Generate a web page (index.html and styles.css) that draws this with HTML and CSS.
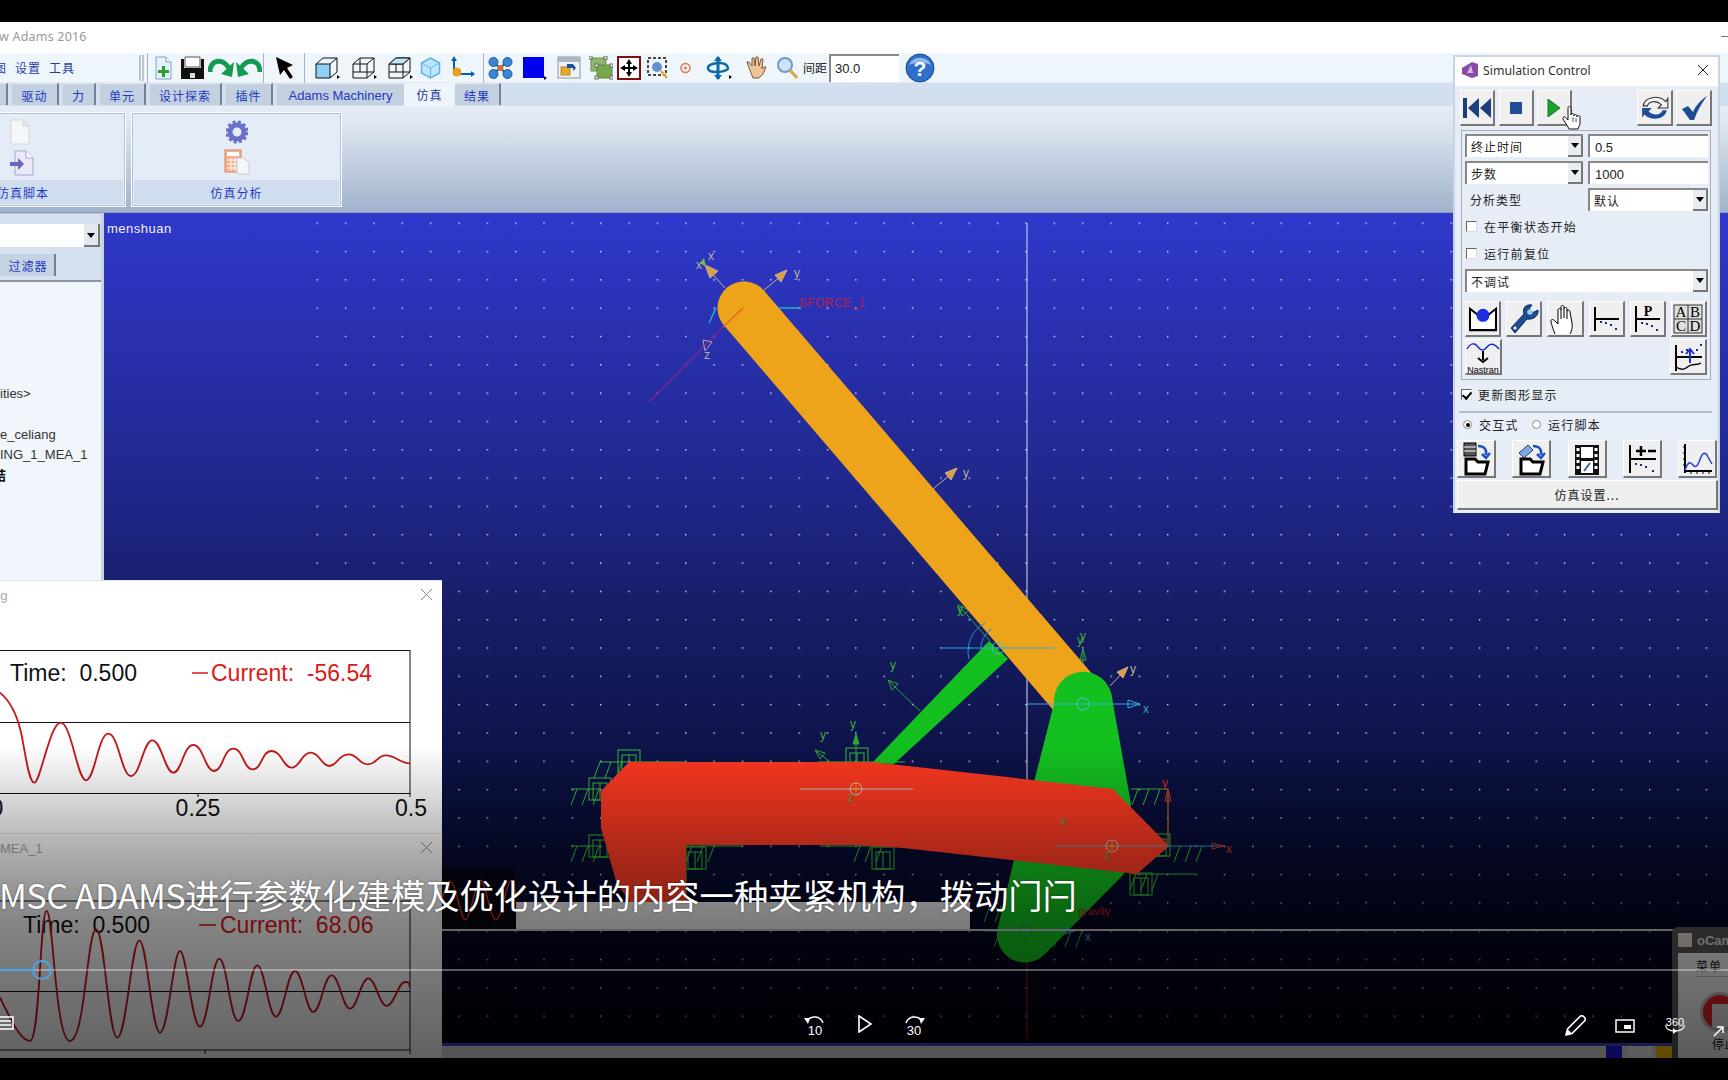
FILE: index.html
```html
<!DOCTYPE html>
<html lang="zh">
<head>
<meta charset="utf-8">
<title>Adams 2016</title>
<link rel="stylesheet" href="styles.css">
</head>
<body>
<div class="screen">
  <div class="bar-top"></div>
  <div class="app">
    <div class="titlebar"><span class="app-name">w Adams 2016</span><span class="min-dash"></span></div>
    <div class="toolbar">
      <div class="menu"><span class="clip">图</span><span>设置</span><span>工具</span></div>
      <i class="grip"></i><i class="sep ml3"></i>
      <svg class="ml7" width="17" height="24" viewBox="0 0 17 24"><path d="M1 1h10l5 5v17H1z" fill="#e4f0fa" stroke="#7ea4c8"/><path d="M11 1v5h5" fill="#fff" stroke="#7ea4c8"/><path d="M7 10h3v4h4v3h-4v4H7v-4H3v-3h4z" fill="#2aa02a"/></svg>
      <svg class="ml9" width="23" height="24" viewBox="0 0 23 24"><path d="M0 3h3v9h17V3h3v20H0z" fill="#111"/><path d="M5 15h13v8H5z" fill="#111"/><rect x="9" y="17" width="5" height="5" fill="#ddd"/><path d="M4 1h15v10H4z" fill="#fff" stroke="#555"/></svg>
      <svg class="ml4" width="26" height="24" viewBox="0 0 26 24"><path d="M2 16C2 3 16 1 22 14" fill="none" stroke="#159a52" stroke-width="5"/><path d="M26 6l-2 15-11-3z" fill="#159a52"/></svg>
      <svg class="ml2" width="26" height="24" viewBox="0 0 26 24"><path d="M24 16C24 3 10 1 4 14" fill="none" stroke="#159a52" stroke-width="5"/><path d="M0 6l2 15 11-3z" fill="#159a52"/></svg>
      <i class="sep ml1"></i>
      <svg class="ml11" width="19" height="24" viewBox="0 0 19 24"><path d="M1 1l17 8-6 3 6 9-3 2-6-9-4 5z" fill="#000"/></svg>
      <i class="sep ml10"></i>
      <svg class="ml10" width="25" height="24" viewBox="0 0 25 24"><path d="M1 8h14v14H1z" fill="#8fd0f4" stroke="#111"/><path d="M1 8l7-6h14v14l-7 6M15 8l7-6" fill="none" stroke="#111"/><path d="M22 19l3 2-3 2z"/></svg>
      <svg class="ml12" width="25" height="24" viewBox="0 0 25 24"><path d="M1 8h14v14H1zM1 8l7-6h14v14l-7 6M15 8l7-6M8 2v14H1M8 16h14" fill="none" stroke="#111"/><path d="M22 19l3 2-3 2z"/></svg>
      <svg class="ml11" width="25" height="24" viewBox="0 0 25 24"><path d="M1 8h14v14H1zM1 8l7-6h14v14l-7 6M15 8l7-6M8 2v14H1M8 16h14" fill="none" stroke="#111"/><path d="M1 8l7-6h14l-7 6z" fill="#bfe3f8" stroke="#111"/><path d="M22 19l3 2-3 2z"/></svg>
      <svg class="ml7" width="21" height="24" viewBox="0 0 21 24"><path d="M10.500 2l9 5v10l-9 5-9-5V7z" fill="#bfe6fb" stroke="#5fb4e4" stroke-width="1.500"/><path d="M1.500 7l9 5 9-5M10.500 12v10" fill="none" stroke="#5fb4e4"/></svg>
      <svg class="ml9" width="27" height="24" viewBox="0 0 27 24"><path d="M4 3v15h17" fill="none" stroke="#0a5fb0" stroke-width="2"/><path d="M4 0l3 5H1zM25 18l-4 3v-6z" fill="#0a5fb0"/><circle cx="7" cy="16" r="4.500" fill="#e8a21e"/></svg>
      <i class="sep ml6"></i>
      <svg class="ml4" width="25" height="24" viewBox="0 0 25 24"><path d="M5 6L19 18M19 6L5 18" stroke="#1f5a9c" stroke-width="2"/><g fill="#3a86d2" stroke="#1f5a9c"><circle cx="5.500" cy="6" r="4.500"/><circle cx="19.500" cy="6" r="4.500"/><circle cx="5.500" cy="18" r="4.500"/><circle cx="19.500" cy="18" r="4.500"/></g><circle cx="12.500" cy="12" r="3" fill="#e06a2a"/></svg>
      <svg class="ml9" width="25" height="24" viewBox="0 0 25 24"><rect x="1" y="1" width="21" height="21" fill="#0000f0"/><path d="M22 20l3 2-3 2z"/></svg>
      <svg class="ml10" width="25" height="24" viewBox="0 0 25 24"><rect x="1" y="1" width="22" height="21" fill="#eef2f7" stroke="#8a96a4"/><rect x="1" y="1" width="22" height="5" fill="#a9b6c4"/><rect x="4" y="11" width="9" height="8" fill="#e6aa2e" stroke="#b98a20"/><path d="M10 8h6l3 4-3 3v-3h-6z" fill="#1d4f9c"/></svg>
      <svg class="ml7" width="24" height="24" viewBox="0 0 24 24"><rect x="2" y="2" width="15" height="13" fill="#8db56b" stroke="#6f8f55"/><rect x="8" y="9" width="15" height="13" fill="#76a84c" stroke="#5e8a3c"/><g fill="#fff" stroke="#666"><rect x="0" y="0" width="3" height="3"/><rect x="15" y="0" width="3" height="3"/><rect x="6" y="8" width="3" height="3"/><rect x="21" y="8" width="3" height="3"/><rect x="6" y="20" width="3" height="3"/><rect x="21" y="20" width="3" height="3"/></g></svg>
      <svg class="ml4" width="24" height="24" viewBox="0 0 24 24"><rect x="1" y="1" width="22" height="22" fill="#fff" stroke="#7a1010" stroke-width="2"/><path d="M12 3l3 5h-2v3h3V9l5 3-5 3v-2h-3v3h2l-3 5-3-5h2v-3H8v2l-5-3 5-3v2h3V8H9z"/></svg>
      <svg class="ml6" width="22" height="24" viewBox="0 0 22 24"><rect x="1" y="2" width="18" height="17" fill="none" stroke="#111" stroke-width="1.500" stroke-dasharray="3 2"/><circle cx="10" cy="11" r="5" fill="#5f93cf"/><path d="M14 15l6 7" stroke="#d9a93c" stroke-width="2.500"/></svg>
      <svg class="ml11" width="11" height="24" viewBox="0 0 11 24"><circle cx="5.500" cy="12" r="4.500" fill="none" stroke="#e4774d" stroke-width="1.500"/><circle cx="5.500" cy="12" r="1.500" fill="#e4774d"/></svg>
      <svg class="ml15" width="26" height="24" viewBox="0 0 26 24"><path d="M12 1v22" stroke="#0d6aa8" stroke-width="3"/><path d="M2 12c0-4 8-5 12-5s8 2 8 5-8 4-12 4-8-1-8-4z" fill="none" stroke="#0d6aa8" stroke-width="2.500"/><path d="M12 0l4 5H8zM12 24l4-5H8z" fill="#0d6aa8"/><path d="M23 19l3 2-3 2z"/></svg>
      <svg class="ml13" width="22" height="24" viewBox="0 0 22 24"><path d="M4 12L2 6h2l3 4 0-8h2l1 8 1-9h2l1 9 2-7h2l-1 10 2-2h2l-3 7-4 4H8z" fill="#eec39a" stroke="#7d5a3a"/></svg>
      <svg class="ml9" width="22" height="24" viewBox="0 0 22 24"><circle cx="9" cy="9" r="7" fill="#cfe3f6" stroke="#6d99c8" stroke-width="2"/><path d="M14 14l7 8" stroke="#d9a93c" stroke-width="3"/></svg>
      <span class="tb-label ml5">间距</span>
      <div class="tb-input ml1">30.0</div>
      <svg class="ml5" width="33" height="30" viewBox="0 0 33 30"><circle cx="16" cy="15" r="14" fill="#2f6fc8" stroke="#1c4a94"/><path d="M5 12a12 12 0 0 1 22 0c-6-3-15-3-22 0z" fill="#8fb7ea"/><text x="16" y="23" class="q">?</text></svg>
    </div>
    <div class="tabs">
      <span class="tab t-clip"></span><span class="tab t-w47">驱动</span><span class="tab t-w33">力</span><span class="tab t-w46">单元</span><span class="tab t-w72">设计探索</span><span class="tab t-w47">插件</span><span class="tab t-w126">Adams Machinery</span><span class="tab tab-active">仿真</span><span class="tab t-w46">结果</span>
    </div>
    <div class="ribbon">
      <section class="panel p1">
        <div class="panel-icons">
          <svg width="20" height="26" viewBox="0 0 20 26"><path d="M1 1h12l6 6v18H1z" fill="#f6f7f9" stroke="#d5d8dd"/><path d="M13 1v6h6" fill="#e2e4e8" stroke="#d5d8dd"/></svg>
          <svg width="24" height="26" viewBox="0 0 24 26"><path d="M5 1h11l7 7v17H5z" fill="#ebe8f7" stroke="#a9a3d6"/><path d="M16 1v7h7" fill="#fff" stroke="#a9a3d6"/><path d="M0 12h8V8l6 6-6 6v-4H0z" fill="#6a66c0"/></svg>
        </div>
        <div class="panel-foot">仿真脚本</div>
      </section>
      <section class="panel p2">
        <div class="panel-icons">
          <svg width="22" height="24" viewBox="0 0 22 24"><circle cx="11" cy="12" r="7" fill="none" stroke="#6a70c8" stroke-width="5"/><circle cx="11" cy="12" r="10" fill="none" stroke="#6a70c8" stroke-width="3" stroke-dasharray="3 2.300"/></svg>
          <svg width="26" height="26" viewBox="0 0 26 26"><rect x="1" y="1" width="16" height="22" fill="#f5b08c" stroke="#e2805c"/><rect x="3" y="3" width="12" height="4" fill="#fff"/><path d="M3 11h12M3 15h12M3 19h12M7 9v13M11 9v13" stroke="#fff"/><path d="M13 9h7l5 5v11H13z" fill="#f5f6f9" stroke="#c8ccd4"/></svg>
        </div>
        <div class="panel-foot">仿真分析</div>
      </section>
    </div>
    <div class="workspace">
      <aside class="tree">
        <div class="tree-top">
          <div class="tree-select"><span class="mini-drop"></span></div>
          <div class="tree-filter-row"><span class="filter">过滤器</span></div>
        </div>
        <div class="tree-list">
          <div class="tl1">ities&gt;</div>
          <div class="tl2">e_celiang</div>
          <div class="tl3">ING_1_MEA_1</div>
          <div class="tl4">结</div>
        </div>
      </aside>
      <div class="viewport">
        <svg class="canvas" viewBox="104 212 1624 846" width="1624" height="846">
          <defs>
            <pattern id="dots" patternUnits="userSpaceOnUse" x="316.5" y="221.500" width="28.35" height="28.32"><rect width="1.400" height="1.400" fill="#fff" opacity=".85"/></pattern>
            <linearGradient id="redg" gradientUnits="userSpaceOnUse" x1="0" y1="761" x2="0" y2="905"><stop offset="0" stop-color="#fc3820"/><stop offset="1" stop-color="#ff3c26"/></linearGradient>
            <g id="hatch" fill="none" stroke="#35c035" stroke-width="1"><path d="M0 0l-6 16M11 0l-6 16M22 0l-6 16"/></g>
            <g id="boxes" fill="none" stroke="#35c035" stroke-width="1"><rect width="22" height="22"/><rect x="4" y="5" width="14" height="17"/><path d="M11 5v17"/></g>
          </defs>
          <rect x="316" y="212" width="1412" height="846" fill="url(#dots)"/>
          <text x="107" y="232" class="mname">menshuan</text>
          <path d="M1027 222V930" stroke="#d8dcf0" stroke-width="1"/>
          <path d="M1027 930V1040" stroke="#b01414" stroke-width="1"/>
          <!-- ground markers -->
          <g>
            <path d="M601 761H686M571 788H600M571 845H600M686 845H743M686 845V895M818 761H905M820 845H905M1131 788H1168V845M1132 873H1195" fill="none" stroke="#35c035"/>
            <use href="#boxes" x="618" y="749"/><use href="#boxes" x="589" y="777"/><use href="#boxes" x="589" y="834"/><use href="#boxes" x="684" y="846"/><use href="#boxes" x="846" y="747"/><use href="#boxes" x="872" y="846"/><use href="#boxes" x="1148" y="833"/><use href="#boxes" x="1130" y="872"/>
            <use href="#hatch" x="600" y="761"/><use href="#hatch" x="577" y="788"/><use href="#hatch" x="577" y="845"/><use href="#hatch" x="692" y="845"/><use href="#hatch" x="860" y="845"/><use href="#hatch" x="1138" y="788"/><use href="#hatch" x="1180" y="845"/><use href="#hatch" x="1136" y="873"/><use href="#hatch" x="1000" y="930"/><use href="#hatch" x="1060" y="930"/><use href="#hatch" x="990" y="905"/>
          </g>
          <!-- axis triads behind links -->
          <g fill="none" stroke="#2ea436">
            <path d="M856 761V733"/><path d="M856 733l-3 10h6z" fill="#2ea436"/>
            <path d="M920 710L888 679"/><path d="M888 679l4 10 6-6z"/>
            <path d="M829 760L816 750"/><path d="M815 749l5 9 5-6z"/>
            <path d="M1083 680V650"/><path d="M1083 648l-3 11h6z"/>
            <path d="M990 640L960 606"/><path d="M958 604l4 11 7-6z"/>
          </g>
          <g class="axt green"><text x="850" y="727">y</text><text x="890" y="668">y</text><text x="820" y="738">y</text><text x="1077" y="643">y</text><text x="957" y="612">y</text></g>
          <!-- green rocker -->
          <path d="M1054 703a29 29 0 0 1 58 -6L1131 803 1124 873 1046 952a28 28 0 0 1-48-26L1013 863z" fill="#14c020"/>
          <!-- orange bar -->
          <path d="M744 307L1083 703" stroke="#eea41a" stroke-width="53" stroke-linecap="round" fill="none"/>
          <path d="M1054 703a29 29 0 0 1 58 -6L1120 760 1040 760z" fill="#14c020"/>
          <!-- green link -->
          <path d="M989 640L1008 658 894 763 872 762z" fill="#14c020"/>
          <!-- red body -->
          <path d="M629 761H872L1113 788 1169 845 1137 873 903 847 855 844H686V895L690 905H632L616 880 601 827V790z" fill="url(#redg)"/>
          <!-- top triads -->
          <g fill="none" stroke="#c8b090">
            <path d="M725 287L708 268"/><path d="M705 264l5 13 8-7z" fill="#d8a040"/>
            <path d="M763 290L787 270"/><path d="M787 269l-12 5 6 7z" fill="#d8a040"/>
            <path d="M933 488L957 468"/><path d="M957 467l-12 5 6 7z" fill="#d8a040"/>
            <path d="M1110 685L1127 667"/><path d="M1128 666l-11 5 6 6z" fill="#d8a040"/>
          </g>
          <path d="M704 257l2 9-6-4z" fill="#7ac030"/>
          <path d="M649 401L723 326" stroke="#742a8c" stroke-width="1.500"/><path d="M723 326L743 307" stroke="#e2651e" stroke-width="1.200"/>
          <path d="M705 350l-2-11 9 2z" fill="none" stroke="#c0a0a0"/>
          <path d="M778 307H801" stroke="#22c0c8" stroke-width="1.300"/><path d="M716 307l-7 15" stroke="#22c0c8" stroke-width="1.300"/>
          <g class="axt tan"><text x="708" y="259">x</text><text x="696" y="268">x</text><text x="794" y="276">y</text><text x="704" y="358">z</text><text x="963" y="476">y</text><text x="1130" y="672">y</text></g>
          <text x="799" y="306" class="sforce">SFORCE_1</text>
          <!-- markers -->
          <g fill="none">
            <path d="M942 647H1054" stroke="#28a8e0" stroke-width="1.200"/>
            <path d="M985 622a32 32 0 0 0-16 36M992 628a22 22 0 0 0-11 22" stroke="#2b8ade"/>
            <circle cx="998" cy="647" r="6" stroke="#40c8b0"/>
            <path d="M1027 703H1140" stroke="#38a8e4" stroke-width="1.200"/><path d="M1140 703l-12-4v8z" stroke="#38a8e4"/>
            <circle cx="1083" cy="703" r="6" stroke="#40d0c0"/>
            <path d="M800 788H913" stroke="#c8c8d0" stroke-width="1.200"/>
            <circle cx="856" cy="788" r="6" stroke="#e0d0b0"/><path d="M852 788h8M856 784v8" stroke="#e8a020"/>
            <path d="M1055 845H1168" stroke="#58a8c8" stroke-width="1.200"/>
            <circle cx="1112" cy="845" r="6" stroke="#c0d8b0"/><path d="M1108 845h8M1112 841v8" stroke="#e8a020"/>
            <path d="M1168 845V790" stroke="#e03020"/><path d="M1168 788l-3 12h6z" stroke="#e03020"/>
            <path d="M1168 845H1222" stroke="#28a0c0"/><path d="M1224 845l-12-3v6z" stroke="#e03020"/>
            <path d="M985 930H1075" stroke="#28a8c8" stroke-width="1"/><circle cx="1026" cy="930" r="6" stroke="#208068"/><path d="M1075 930l-10-3v6z" stroke="#28a8c8"/>
          </g>
          <g class="axt"><text class="green" x="1080" y="639">y</text><text class="cyan" x="1143" y="712">x</text><text class="red" x="1162" y="786">y</text><text class="red" x="1226" y="852">x</text><text class="green" x="1060" y="824">x</text><text class="green" x="848" y="800">z</text><text class="green" x="1104" y="858">z</text><text class="cyan" x="1085" y="940">x</text><text class="green" x="993" y="655">z</text></g>
          <text x="1078" y="914" class="gravity">gravity</text>
        </svg>
      </div>
    </div>
    <!-- floating windows -->
    <div class="plotwin plot1">
      <div class="plot-title"><span>ug</span><svg class="plot-x" width="11" height="11" viewBox="0 0 11 11"><path d="M0 0l11 11M11 0L0 11" stroke="#888"/></svg></div>
      <svg class="plot-svg" width="442" height="252" viewBox="0 0 442 252">
        <rect x="-2" y="69.500" width="412" height="143" class="frame"/>
        <path d="M0 141.500H410M198 212v4M410 212v4" class="frame"/>
        <text x="10" y="100" class="ptxt" xml:space="preserve">Time:  0.500</text>
        <path d="M192 92H208" stroke="#e01818" stroke-width="1.500"/>
        <text x="211" y="100" class="ptxt redt" xml:space="preserve">Current:  -56.54</text>
        <text x="198" y="235" class="ptxt mid">0.25</text>
        <text x="411" y="235" class="ptxt mid">0.5</text>
        <text x="-3" y="235" class="ptxt mid">0</text>
        <g transform="translate(0,-10) scale(.3333)"><path class="curve" d="M0 365C30 390 50 430 62 480S85 635 103 635S150 455 182 455S232 628 258 628S295 488 325 488S365 615 393 615S430 508 457 508S495 605 520 605S550 522 580 522S615 600 642 600S670 533 700 533S730 595 758 595S785 540 815 540S850 590 875 590S905 545 932 545S965 585 988 585S1015 550 1045 550S1075 580 1103 580S1130 553 1158 553S1200 577 1230 577"/></g>
      </svg>
    </div>
    <div class="plotwin plot2">
      <div class="plot-title"><span>MEA_1</span><svg class="plot-x" width="11" height="11" viewBox="0 0 11 11"><path d="M0 0l11 11M11 0L0 11" stroke="#888"/></svg></div>
      <svg class="plot-svg" width="442" height="225" viewBox="0 0 442 225">
        <rect x="-2" y="67" width="412" height="149" class="frame"/>
        <path d="M0 157.500H410M205 216v4M410 216v4" class="frame"/>
        <text x="23" y="99" class="ptxt" xml:space="preserve">Time:  0.500</text>
        <path d="M199 91H216" stroke="#e01818" stroke-width="1.500"/>
        <text x="220" y="99" class="ptxt redt" xml:space="preserve">Current:  68.06</text>
        <text x="205" y="243" class="ptxt mid">0.25</text>
        <text x="411" y="243" class="ptxt mid">0.5</text>
        <g transform="translate(0,-263) scale(.3333)"><path class="curve" d="M0 1280C30 1340 60 1410 90 1410S120 1020 140 1020S165 1410 210 1410S262 1075 288 1075S325 1400 352 1400S395 1108 418 1108S455 1385 480 1385S520 1140 540 1140S575 1367 600 1367S635 1163 658 1163S690 1350 715 1350S750 1183 772 1183S805 1337 828 1337S862 1200 885 1200S918 1323 940 1323S972 1213 995 1213S1028 1313 1050 1313S1083 1222 1105 1222S1138 1305 1160 1305S1195 1233 1215 1233S1225 1240 1230 1248"/></g>
      </svg>
    </div>
    <svg class="wave" width="74" height="60" viewBox="0 0 74 60"><path d="M0 30C6 5 10 5 16 30S24 58 31 30S40 5 46 30S55 58 62 30S70 8 74 25" fill="none" stroke="#ff3030" stroke-width="1.200"/></svg>
    <div class="graybar"></div>
    <div class="hline"></div>
    <div class="statusbar"><i class="st-blue"></i><i class="st-light"></i><i class="st-yellow"></i></div>
    <div class="ocam">
      <div class="ocam-title"><i class="ocam-ico"></i>oCam</div>
      <div class="ocam-body">
        <div class="ocam-menu">菜单</div>
        <div class="ocam-rec"><i></i></div>
        <div class="ocam-stop">停止</div>
      </div>
    </div>
    <div class="shade"></div>
    <!-- simulation window -->
    <div class="sim">
      <div class="sim-title">
        <svg width="18" height="16" viewBox="0 0 18 16"><path d="M1 6L11 0l6 2v12l-6 2-10-4z" fill="#8a4aa8"/><path d="M6 11l4-8 2 8z" fill="#d8b8e4"/></svg>
        <span class="sim-name">Simulation Control</span>
        <svg class="sim-x" width="12" height="12" viewBox="0 0 12 12"><path d="M1 1l10 10M11 1L1 11" stroke="#222"/></svg>
      </div>
      <div class="sim-top">
        <button class="btn b35"><svg width="30" height="24" viewBox="0 0 30 24"><rect x="1" y="2" width="4" height="20" fill="#1c3f80"/><path d="M17 2L6 12l11 10zM29 2L18 12l11 10z" fill="#1c3f80"/></svg></button>
        <button class="btn b35 mlb4"><svg width="12" height="12" viewBox="0 0 12 12"><rect x="0" y="0" width="12" height="12" fill="#1f4c94"/></svg></button>
        <button class="btn b35 mlb3"><svg width="14" height="20" viewBox="0 0 14 20"><path d="M1 1l12 9L1 19z" fill="#1d9e30" stroke="#0c7c20"/></svg></button>
        <button class="btn b36 mlauto"><svg width="30" height="30" viewBox="0 0 28 28"><path d="M3 12C4 4 17 1 24 8l2-3v9h-9l3-3C15 6 8 8 7 12z" fill="#f2f2f2" stroke="#333"/><path d="M25 16c-1 8-14 11-21 4l-2 3v-9h9l-3 3c5 5 12 3 13-1z" fill="#1f4c94"/></svg></button>
        <button class="btn b36 mlb3"><svg width="28" height="24" viewBox="0 0 28 24"><path d="M2 13l6-3 5 6C16 9 21 4 27 0c-5 7-10 15-13 24h-4z" fill="#1f4c94"/></svg></button>
      </div>
      <div class="sim-group">
        <div class="pair pair-a">
          <div class="combo"><span>终止时间</span><i class="drop"></i></div>
          <div class="field">0.5</div>
        </div>
        <div class="pair pair-b">
          <div class="combo"><span>步数</span><i class="drop"></i></div>
          <div class="field">1000</div>
        </div>
        <div class="pair pair-b">
          <div class="lbl">分析类型</div>
          <div class="combo"><span>默认</span><i class="drop"></i></div>
        </div>
        <div class="chk chk-a"><i class="box"></i>在平衡状态开始</div>
        <div class="chk chk-b"><i class="box"></i>运行前复位</div>
        <div class="combo wide"><span>不调试</span><i class="drop"></i></div>
        <div class="icons">
          <button class="btn bi"><svg width="30" height="26" viewBox="0 0 32 28"><path d="M2 3l14 11L30 3v23H2z" fill="#fff" stroke="#000" stroke-width="2.200"/><circle cx="16" cy="10" r="7" fill="#1a2ee0"/></svg></button>
          <button class="btn bi"><svg width="30" height="30" viewBox="0 0 30 30"><path d="M2 24L15 10c-2-6 2-10 8-9l-3 4 3 4 6-3c1 6-5 10-11 9L6 29z" fill="#1f4c94" stroke="#0a2a66"/><circle cx="21" cy="8" r="2.800" fill="#9ccbf0"/><circle cx="6" cy="24" r="1.500" fill="#fff"/></svg></button>
          <button class="btn bi"><svg width="30" height="32" viewBox="0 0 30 32"><path d="M5 31C3 26 1 20 1 18c0-2 2-2 4 0l3 3V7c0-2 3-2 3 0v-3c0-2 3-2 3 0v2c0-2 3-2 3 0v2c0-2 3-1 3 1l2 11c1 5-1 9-2 11" fill="#fff" stroke="#000"/><path d="M11 7v9M14 6v9M17 8v8" stroke="#000"/></svg></button>
          <button class="btn bi"><svg width="28" height="28" viewBox="0 0 28 28"><path d="M3 2v24M3 14h24" stroke="#000" stroke-width="2"/><g fill="#1a2a80"><rect x="8" y="16" width="2" height="2"/><rect x="13" y="17" width="2" height="2"/><rect x="18" y="19" width="2" height="2"/><rect x="23" y="23" width="2" height="2"/></g></svg></button>
          <button class="btn bi"><svg width="28" height="30" viewBox="0 0 28 30"><path d="M3 2v26M3 15h24" stroke="#000" stroke-width="2"/><text x="15" y="12" class="serifb">P</text><g fill="#1a2a80"><rect x="8" y="18" width="2" height="2"/><rect x="13" y="19" width="2" height="2"/><rect x="18" y="21" width="2" height="2"/><rect x="23" y="25" width="2" height="2"/></g></svg></button>
          <button class="btn bi"><svg width="30" height="30" viewBox="0 0 30 30"><rect x="1" y="1" width="28" height="28" fill="#ddd" stroke="#333"/><path d="M15 1v28M1 15h28" stroke="#333"/><text x="8" y="13" class="abc">A</text><text x="22" y="13" class="abc">B</text><text x="8" y="27" class="abc">C</text><text x="22" y="27" class="abc">D</text></svg></button>
        </div>
        <div class="icons row2">
          <button class="btn bi"><svg width="34" height="36" viewBox="0 0 34 36"><path d="M1 10c4-7 8-6 11-2 3 4 6 4 9 0 3-4 7-4 12 2" fill="none" stroke="#1a2ee0" stroke-width="1.500"/><path d="M17 12v9M12 19l5 4 5-4" fill="none" stroke="#000" stroke-width="2"/><text x="17" y="34" class="nast">Nastran</text></svg></button>
          <button class="btn bi mlauto"><svg width="30" height="32" viewBox="0 0 30 32"><path d="M3 4v26M3 16h26" stroke="#000" stroke-width="2"/><path d="M3 26c6 4 9 2 13-1s8 0 12-3" fill="none" stroke="#000" stroke-width="1.500"/><path d="M17 8v14M13 13l4-5 4 5" stroke="#1a2ee0" stroke-width="2" fill="none"/><g fill="#1a2a80"><rect x="8" y="10" width="2" height="2"/><rect x="13" y="8" width="2" height="2"/><rect x="23" y="8" width="2" height="2"/><rect x="27" y="3" width="2" height="2"/></g></svg></button>
        </div>
      </div>
      <div class="chk chk-c"><i class="box on"></i>更新图形显示</div>
      <div class="radios"><i class="radio on"></i><span>交互式</span><i class="radio r2"></i><span>运行脚本</span></div>
      <div class="bottom-btns">
        <button class="btn bb"><svg width="34" height="34" viewBox="0 0 34 34"><rect x="5" y="1" width="12" height="13" fill="#555" stroke="#000"/><path d="M5 5h12M5 9h12" stroke="#fff"/><path d="M19 4c6 0 9 3 8 9M23 12l4 4 4-5" fill="none" stroke="#1a50c0" stroke-width="2.500"/><path d="M7 17h9l3 3h10l-3 12H7z" fill="#fff" stroke="#000" stroke-width="3"/></svg></button>
        <button class="btn bb"><svg width="34" height="34" viewBox="0 0 34 34"><path d="M5 11l9-8 5 5-9 8z" fill="#7fa8dc" stroke="#1a3f90"/><path d="M19 4c6 0 9 3 8 9M23 12l4 4 4-5" fill="none" stroke="#1a50c0" stroke-width="2.500"/><path d="M7 17h9l3 3h10l-3 12H7z" fill="#fff" stroke="#000" stroke-width="3"/></svg></button>
        <button class="btn bb"><svg width="28" height="34" viewBox="0 0 28 34"><rect x="2" y="3" width="24" height="30" fill="#111"/><rect x="8" y="5" width="12" height="11" fill="#fff"/><rect x="8" y="19" width="12" height="12" fill="#fff"/><g fill="#fff"><rect x="3.500" y="6" width="3" height="3"/><rect x="3.500" y="12" width="3" height="3"/><rect x="3.500" y="18" width="3" height="3"/><rect x="3.500" y="24" width="3" height="3"/><rect x="21.500" y="6" width="3" height="3"/><rect x="21.500" y="12" width="3" height="3"/><rect x="21.500" y="18" width="3" height="3"/><rect x="21.500" y="24" width="3" height="3"/></g><path d="M11 29l6-8" stroke="#3a60c0" stroke-width="2"/></svg></button>
        <button class="btn bb"><svg width="30" height="32" viewBox="0 0 30 32"><path d="M3 2v28M3 16h26" stroke="#000" stroke-width="2"/><path d="M9 8h10M14 3v10M21 8h8" stroke="#000" stroke-width="2.500"/><g fill="#1a2a80"><rect x="8" y="20" width="2" height="2"/><rect x="13" y="21" width="2" height="2"/><rect x="18" y="23" width="2" height="2"/><rect x="25" y="27" width="2" height="2"/></g></svg></button>
        <button class="btn bb"><svg width="34" height="34" viewBox="0 0 34 34"><path d="M5 2v29M5 29h27" stroke="#000" stroke-width="2"/><path d="M3 5h3M3 11h3M3 17h3M3 23h3M11 28v4M17 28v4M23 28v4M29 28v4" stroke="#000"/><path d="M5 28c3-8 5-9 8-5s5 0 8-8c2-5 5-5 7 0l4 7" fill="none" stroke="#2a40c8" stroke-width="1.500"/></svg></button>
      </div>
      <button class="btn settings">仿真设置...</button>
      <svg class="hand" width="20" height="25" viewBox="0 0 20 25"><path d="M6 22L1 14C0 12 3 11 4 13L6 15V3C6 1 9 1 9 3V10C9 8 12 8 12 10V11C12 9 15 9 15 11V12C15 10 18 10 18 12V18C18 20 17 21 16 24H7z" fill="#fff" stroke="#111"/><path d="M11 12v5M14 13v4" stroke="#111" stroke-width=".7"/></svg>
    </div>
    <!-- player overlay -->
    <div class="scrub"><i class="scrub-fill"></i><i class="scrub-knob"></i></div>
    <p class="caption"><span class="cap-lat">MSC ADAMS</span>进行参数化建模及优化设计的内容一种夹紧机构，拨动门闩</p>
    <svg class="subs" width="14" height="14" viewBox="0 0 14 14"><path d="M-2 1H13V13H-2zM0 5H11M0 9H11" fill="none" stroke="#fff" stroke-width="1.500"/></svg>
    <div class="controls">
      <svg width="22" height="24" viewBox="0 0 22 24"><path d="M4 9a9 9 0 0 1 16 2" fill="none" stroke="#fff" stroke-width="1.500"/><path d="M1 6l6 0-2 6z" fill="#fff"/><text x="12" y="23" class="ctl">10</text></svg>
      <svg class="ctl-play" width="16" height="18" viewBox="0 0 16 18"><path d="M2 1l12 8-12 8z" fill="none" stroke="#fff" stroke-width="1.600"/></svg>
      <svg class="ctl-30" width="22" height="24" viewBox="0 0 22 24"><path d="M2 11a9 9 0 0 1 16-2" fill="none" stroke="#fff" stroke-width="1.500"/><path d="M21 6l-6 0 2 6z" fill="#fff"/><text x="10" y="23" class="ctl">30</text></svg>
    </div>
    <svg class="ctl-pen" width="22" height="22" viewBox="0 0 22 22"><path d="M2 20l1.500-6L16 1.500c1-1 2.500-1 3.500 0l1 1c1 1 1 2.500 0 3.500L8 18.500z" fill="none" stroke="#fff" stroke-width="1.600"/><path d="M2 20l1.500-6 4.500 4.500z" fill="#fff"/></svg>
    <svg class="ctl-pip" width="20" height="14" viewBox="0 0 20 14"><rect x="1" y="1" width="18" height="12" fill="none" stroke="#fff" stroke-width="1.500"/><rect x="9" y="6" width="7" height="4" fill="#fff"/></svg>
    <svg class="ctl-360" width="22" height="22" viewBox="0 0 22 22"><text x="10" y="11" class="ctl3">360</text><path d="M1 10c-1 4 4 6 9 6s10-2 9-6" fill="none" stroke="#fff" stroke-width="1.200"/><path d="M8 13l4 3-4 3z" fill="#fff"/></svg>
    <svg class="ctl-arrow" width="12" height="12" viewBox="0 0 12 12"><path d="M1 11L10 2M4 2h6v6" fill="none" stroke="#fff" stroke-width="1.500"/></svg>
  </div>
  <div class="bar-bottom"></div>
</div>
</body>
</html>
```
FILE: styles.css
```css
* { box-sizing: border-box; }
html, body { margin: 0; padding: 0; background: #000; }
body { font-family: "Noto Sans CJK SC", "Liberation Sans", sans-serif; }
i { display: block; }
button { font: inherit; padding: 0; }
svg { display: block; flex: none; }

.screen { width: 1728px; height: 1080px; display: flex; flex-direction: column; overflow: hidden; background: #000; }
.bar-top { height: 22px; flex: none; background: #000; }
.bar-bottom { height: 22px; flex: none; background: #000; position: relative; z-index: 9; }
.app { position: relative; height: 1036px; flex: none; overflow: hidden; display: flex; flex-direction: column; background: #fff; }

.titlebar { height: 31px; flex: none; background: #fff; display: flex; align-items: center; justify-content: space-between; font: 12.5px "Noto Sans", "Liberation Sans", sans-serif; color: #9a9a9a; padding-bottom: 2px; }
.app-name { letter-spacing: .2px; margin-left: -1px; }
.min-dash { width: 10px; height: 1px; background: #777; margin-right: -3px; }

.toolbar { height: 30px; flex: none; display: flex; align-items: center; background: #eef5fb; border-bottom: 1px solid #e2ebf4; }
.menu { width: 139px; height: 100%; display: flex; align-items: center; font-size: 12px; letter-spacing: 1px; color: #1f3fa8; gap: 8px; overflow: hidden; }
.menu .clip { margin-left: -6px; }
.grip { width: 5px; height: 26px; border-left: 2px solid #b8c4d0; border-right: 2px solid #b8c4d0; }
.sep { width: 1px; height: 30px; background: #a8b4c0; }
.ml1 { margin-left: 1px; } .ml2 { margin-left: 2px; } .ml3 { margin-left: 3px; } .ml4 { margin-left: 4px; } .ml5 { margin-left: 5px; } .ml6 { margin-left: 6px; } .ml7 { margin-left: 7px; } .ml9 { margin-left: 9px; } .ml10 { margin-left: 10px; } .ml11 { margin-left: 11px; } .ml12 { margin-left: 12px; } .ml13 { margin-left: 13px; } .ml15 { margin-left: 15px; }
.tb-label { width: 25px; font-size: 12px; color: #222; white-space: nowrap; }
.tb-input { width: 70px; height: 28px; background: #fff; border-top: 2px solid #888; border-left: 2px solid #888; font: 13px "Liberation Sans", sans-serif; color: #222; padding: 5px 4px; }
.q { font: bold 21px "Liberation Sans", sans-serif; fill: #fff; text-anchor: middle; }

.tabs { height: 23px; flex: none; display: flex; background: #d2dfee; }
.tab { height: 22px; margin-right: 4px; flex: none; display: flex; align-items: center; justify-content: center; font-size: 12px; letter-spacing: 1px; color: #2438c0; background: #c2d0e0; border-right: 2px solid #74818e; border-top: 1px solid #e0e8f2; padding-top: 2px; }
.t-clip { width: 8px; }
.t-w47 { width: 47px; } .t-w33 { width: 33px; } .t-w46 { width: 46px; } .t-w72 { width: 72px; }
.t-w126 { width: 127px; margin-right: 0; border-right: 0; font: 13px "Liberation Sans", sans-serif; letter-spacing: 0; }
.tab-active { width: 51px; height: 23px; margin-right: 0; background: #eef4fb; border: 0; color: #2438a0; padding-top: 0; }

.ribbon { height: 107px; flex: none; background: linear-gradient(#e6edf7, #dfe7f2 15%, #a0b3cb 100%); border-bottom: 1px solid #8a9ab8; display: flex; gap: 5px; padding-top: 6px; overflow: hidden; }
.panel { height: 95px; background: #e4ecf7; border: 1px solid #fff; outline: 1px solid #b4c2d4; outline-offset: -2px; display: flex; flex-direction: column; position: relative; }
.p1 { width: 146px; margin-left: -20px; }
.p2 { width: 211px; }
.panel-icons { flex: 1; display: flex; flex-direction: column; align-items: center; justify-content: center; gap: 5px; padding-top: 2px; }
.p1 .panel-icons { align-items: flex-start; padding-left: 29px; }
.panel-foot { height: 24px; flex: none; background: #d0ddef; display: flex; align-items: center; justify-content: center; font-size: 12px; letter-spacing: 1px; color: #1f3ac0; margin: 0 2px 2px; }
.p1 .panel-foot { justify-content: flex-start; padding-left: 14px; }

.workspace { flex: 1; display: flex; min-height: 0; }
.tree { width: 104px; flex: none; background: #f0f6fc; border-right: 3px solid #c8d2de; overflow: hidden; display: flex; flex-direction: column; }
.tree-top { height: 69px; flex: none; background: #d6e1ef; padding-top: 10px; border-top: 1px solid #bac4d0; border-bottom: 2px solid #8a96a4; }
.tree-select { width: 100px; height: 23px; background: #fff; position: relative; }
.mini-drop { position: absolute; right: 0; top: 0; width: 16px; height: 23px; background: #e2e8f0; border-right: 2px solid #777; border-bottom: 2px solid #777; }
.mini-drop::after { content: ""; position: absolute; left: 3px; top: 9px; border: 4px solid transparent; border-top: 5px solid #000; border-bottom: 0; }
.tree-filter-row { height: 22px; margin-top: 7px; }
.filter { display: flex; align-items: center; justify-content: center; width: 56px; height: 22px; background: #c4d2e2; border-right: 2px solid #74818e; font-size: 12px; letter-spacing: 1px; color: #2438c0; padding-left: 2px; }
.tree-list { font: 13px "Liberation Sans", sans-serif; color: #333; white-space: nowrap; }
.tl1 { margin-top: 102px; line-height: 20px; }
.tl2 { margin-top: 21px; line-height: 20px; }
.tl3 { line-height: 20px; }
.tl4 { line-height: 20px; margin-left: -7px; font: bold 13px "Noto Sans CJK SC", sans-serif; color: #111; }

.viewport { flex: 1; position: relative; background: linear-gradient(#3038cc, #1f2688 34%, #181e68 46%, #0f1650 60%, #05082a 80%, #000008 100%); overflow: hidden; }
.canvas { position: absolute; left: 0; top: 0; }
.mname { font: 13px "Liberation Sans", sans-serif; fill: #f0f0ff; letter-spacing: .5px; }
.axt text, .axt { font: 12px "Liberation Sans", sans-serif; }
.axt .green, .axt.green { fill: #3cae3c; }
.axt.tan { fill: #b8b0a0; }
.axt .cyan { fill: #38a0b8; }
.axt .red { fill: #d03020; }
.sforce { font: 12px "Liberation Sans", sans-serif; fill: #b8204c; letter-spacing: .4px; }
.gravity { font: 11px "Liberation Sans", sans-serif; fill: #c01c1c; }

.plotwin { position: absolute; left: 0; width: 442px; background: #fff; overflow: hidden; border-top: 1px solid #e4e4e4; }
.plot1 { top: 558px; height: 253px; }
.plot2 { top: 811px; height: 225px; }
.plot-title { height: 30px; font: 13px "Liberation Sans", sans-serif; color: #aaa; padding: 7px 0 0 0; position: relative; }
.plot1 .plot-title span { margin-left: -7px; }
.plot-x { position: absolute; right: 10px; top: 8px; }
.plot-svg { position: absolute; left: 0; top: 0; }
.frame { fill: none; stroke: #111; stroke-width: 1; }
.ptxt { font: 23px "Liberation Sans", sans-serif; fill: #111; }
.redt { fill: #e01818; }
.mid { text-anchor: middle; }
.curve { fill: none; stroke: #c4181a; stroke-width: 5.5; }

.wave { position: absolute; left: 442px; top: 848px; background: #05050f; }
.graybar { position: absolute; left: 516px; top: 880px; width: 454px; height: 28px; background: #eeeeee; }
.hline { position: absolute; left: 442px; right: 0; top: 907px; height: 2px; background: #c4c4c4; }
.statusbar { position: absolute; left: 442px; right: 0; top: 1021px; height: 15px; background: #dcdcdc; border-top: 3px solid #3a44c8; display: flex; justify-content: flex-end; padding-right: 56px; gap: 6px; }
.st-blue { width: 16px; height: 12px; background: #1a1ae0; }
.st-light { width: 24px; height: 12px; background: #f0f0f0; }
.st-yellow { width: 16px; height: 12px; margin-left: -2px; background: #ffc400; }

.ocam { position: absolute; left: 1672px; top: 905px; width: 60px; height: 131px; background: #555; border-radius: 6px 0 0 0; padding-left: 6px; overflow: hidden; }
.ocam-title { height: 26px; color: #ddd; font: bold 13px "Liberation Sans", sans-serif; display: flex; align-items: center; gap: 5px; }
.ocam-ico { width: 14px; height: 14px; background: #e8d8c8; flex: none; }
.ocam-body { background: #f0f0f0; height: 110px; padding-left: 18px; font-size: 12px; color: #222; }
.ocam-menu { height: 24px; padding-top: 4px; margin-left: 0; border-bottom: 1px solid #bbb; white-space: nowrap; letter-spacing: 1px; }
.ocam-rec { width: 40px; height: 40px; border-radius: 50%; background: #e02020; border: 3px solid #bbb; margin-top: 15px; margin-left: 4px; position: relative; overflow: hidden; }
.ocam-rec i { position: absolute; left: 9px; top: 9px; width: 30px; height: 30px; background: #ddd; }
.ocam-stop { margin-top: 3px; margin-left: 16px; white-space: nowrap; }

.shade { position: absolute; left: 0; right: 0; top: 723px; height: 313px; pointer-events: none; background: linear-gradient(rgba(0,0,0,0), rgba(0,0,0,.13) 14%, rgba(0,0,0,.33) 35%, rgba(0,0,0,.48) 56%, rgba(0,0,0,.62) 100%); }

.sim { position: absolute; left: 1453px; top: 33px; width: 267px; height: 458px; background: #e6edf7; border: 2px solid #eef3f9; border-color: #c8d4e2 #c8d4e2 #e8eef6; color: #222; font-size: 12px; }
.sim-title { height: 29px; background: #fff; display: flex; align-items: center; padding: 0 9px 3px 6px; gap: 4px; }
.sim-name { font: 12.3px "Noto Sans", "Liberation Sans", sans-serif; color: #333; }
.sim-x { margin-left: auto; }
.btn { display: flex; align-items: center; justify-content: center; background: #efefef; border: 1px solid; border-color: #fff #777 #777 #fff; border-width: 1px 2px 2px 1px; color: #222; }
.sim-top { display: flex; height: 36px; margin: 4px 6px 0 5px; }
.b35 { width: 35px; height: 36px; }
.b36 { width: 36px; height: 36px; }
.mlb3 { margin-left: 3px; } .mlb4 { margin-left: 4px; } .mlauto { margin-left: auto; }
.sim-group { margin: 4px 7px 0 6px; height: 250px; border: 1px solid #a4aeba; padding: 3px 3px 0; display: flex; flex-direction: column; }
.pair { display: grid; grid-template-columns: 118px 120px; column-gap: 5px; }
.pair-b { margin-top: 4px; }
.combo { height: 23px; background: #fff; border-top: 2px solid #888; border-left: 2px solid #888; display: flex; align-items: center; justify-content: space-between; padding-left: 4px; letter-spacing: 1px; }
.drop { width: 15px; height: 21px; background: #e8ecf2; border-right: 2px solid #777; border-bottom: 2px solid #777; position: relative; }
.drop::after { content: ""; position: absolute; left: 3px; top: 7px; border: 4px solid transparent; border-top: 5px solid #000; border-bottom: 0; }
.field { height: 23px; background: #fff; border-top: 2px solid #888; border-left: 2px solid #888; font: 13px "Liberation Sans", sans-serif; padding: 4px 5px; }
.lbl { padding: 3px 0 0 5px; letter-spacing: 1px; }
.chk { display: flex; align-items: center; letter-spacing: 1.300px; height: 20px; }
.chk-a { margin-top: 5px; }
.chk-b { margin-top: 7px; }
.box { width: 11px; height: 11px; margin-right: 7px; background: #fff; border: 1px solid; border-color: #666 #ddd #ddd #666; flex: none; }
.box.on { position: relative; margin-right: 6px; }
.box.on::after { content: ""; position: absolute; left: 2px; top: 0; width: 4px; height: 7px; border: solid #000; border-width: 0 2px 2px 0; transform: rotate(40deg); }
.chk-a, .chk-b { padding-left: 1px; }
.wide { margin-top: 6px; width: 243px; }
.icons { display: flex; gap: 5px; margin-top: 9px; }
.icons.row2 { margin-top: 2px; }
.bi { width: 37px; height: 36px; }
.chk-c { margin: 4px 0 0 6px; }
.radios { margin: 7px 6px 0 4px; height: 25px; background: #e8eff8; border-top: 2px solid #b4bdc8; display: flex; align-items: center; padding-left: 4px; letter-spacing: 1.300px; gap: 7px; }
.radio { width: 9px; height: 9px; border-radius: 50%; background: #fff; border: 1px solid #888; position: relative; }
.radio.on::after { content: ""; position: absolute; left: 1.500px; top: 1.500px; width: 4px; height: 4px; border-radius: 50%; background: #000; }
.radio.r2 { margin-left: 6px; }
.bottom-btns { display: flex; justify-content: space-between; margin: 4px 1px 0 2px; }
.bb { width: 39px; height: 38px; }
.settings { width: 261px; height: 30px; margin: 2px 0 0 2px; letter-spacing: 1px; font-size: 12px; }
.hand { position: absolute; left: 107px; top: 48px; }
.serifb { font: bold 14px "Liberation Serif", serif; text-anchor: middle; fill: #000; }
.abc { font: 15px "Liberation Serif", serif; text-anchor: middle; fill: #000; }
.nast { font: 9px "Liberation Sans", sans-serif; text-anchor: middle; fill: #000; }

.scrub { position: absolute; left: 0; right: 0; top: 947px; height: 1.500px; background: rgba(255,255,255,.35); }
.scrub-fill { position: absolute; left: 0; top: 0; width: 34px; height: 2px; background: #49a6e6; }
.scrub-knob { position: absolute; left: 32px; top: -9px; width: 20px; height: 20px; border-radius: 50%; border: 2px solid #49a6e6; }
.caption { position: absolute; left: -1px; top: 846px; margin: 0; font: 400 34.3px/52px "Noto Sans CJK SC", "Noto Sans", sans-serif; color: #fff; white-space: nowrap; text-shadow: 0 0 2px rgba(0,0,0,.5); }
.cap-lat { letter-spacing: -.55px; }
.subs { position: absolute; left: 0; top: 994px; }
.controls { position: absolute; left: 803px; top: 990px; display: flex; align-items: center; }
.ctl-play { margin-left: 32px; }
.ctl-30 { margin-left: 31px; }
.ctl { font: 13px "Liberation Sans", sans-serif; fill: #fff; text-anchor: middle; }
.ctl3 { font: 11px "Liberation Sans", sans-serif; fill: #fff; text-anchor: middle; }
.ctl-pen { position: absolute; left: 1564px; top: 993px; }
.ctl-pip { position: absolute; left: 1615px; top: 997px; }
.ctl-360 { position: absolute; left: 1665px; top: 993px; }
.ctl-arrow { position: absolute; left: 1713px; top: 1003px; }
```
